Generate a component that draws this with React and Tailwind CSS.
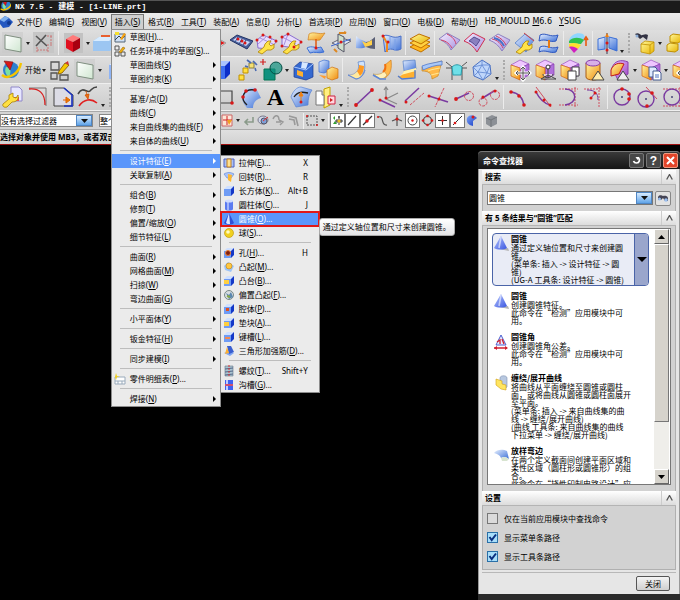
// src/App.jsx
import { useState } from 'react';

const ui = "font-['Noto_Sans','Noto_Sans_CJK_SC',sans-serif]";

// shared gradients, referenced by id from the icons below
function Gradients() {
  const list = [
    ['blue', '#e8f1ff', '#3b6fd6'],
    ['deep', '#7fa6f5', '#1237c4'],
    ['gold', '#fff6a0', '#f08a10'],
    ['yel', '#fff79a', '#e8b400'],
    ['lilac', '#f6f0ff', '#a78fe0'],
    ['sheet', '#ffffff', '#cfe6d0'],
    ['pink', '#ecc8ff', '#9a3fc0'],
    ['cone', '#b9c9ff', '#3a56e0'],
  ];
  return (
    <svg width="0" height="0" className="absolute" aria-hidden="true">
      <defs>
        {list.map(([id, a, b]) => (
          <linearGradient key={id} id={id} x1="0" y1="0" x2="1" y2="1">
            <stop offset="0" stopColor={a} />
            <stop offset="1" stopColor={b} />
          </linearGradient>
        ))}
      </defs>
    </svg>
  );
}

const dots = (pts, r = 1.5) => pts.map(([x, y], i) => <circle key={i} cx={x} cy={y} r={r} fill="#d81818" />);

const wrench = (
  <path d="M4 21l6-5 1-3 3-3 3 0-2 3 2 2 3-2 0 4-3 2-4 0-5 4z" fill="#ffe34a" stroke="#b08400" strokeWidth=".8" />
);

const cube = (
  <>
    <path d="M3 7l9-5 9 4-9 4z" fill="#efc6ff" stroke="#9a50c0" strokeWidth=".7" />
    <path d="M12 10l9-4v11l-9 5z" fill="#b070dc" stroke="#8a3fb0" strokeWidth=".7" />
    <path d="M3 7l9 3v12l-9-4z" fill="url(#gold)" stroke="#d06010" strokeWidth=".7" />
  </>
);

const icons = {
  blank: null,
  plane: (
    <>
      <rect x="1" y="1" width="21" height="21" fill="#cacaca" opacity=".6" />
      <path d="M4 4l16 3v14L4 18z" fill="url(#sheet)" stroke="#7f8f80" />
    </>
  ),
  dims: (
    <>
      <rect x="1" y="1" width="21" height="21" fill="#c6c6c6" />
      <path d="M4 5l11 10M14 4L4 15" stroke="#555" strokeWidth="1.6" fill="none" />
      <path d="M5 16v5M16 16v5M5 19h11M15 5h6M15 14h6M19 5v9" stroke="#c77" fill="none" strokeDasharray="2 1" />
    </>
  ),
  redcube: (
    <>
      <rect x="3" y="2" width="19" height="20" fill="#c2c2c2" />
      <path d="M5 8l7-4 7 3-7 4z" fill="#ff7a7a" />
      <path d="M5 8l7 3v10l-7-4z" fill="#e01020" />
      <path d="M12 11l7-4v10l-7 4z" fill="#a80010" />
    </>
  ),
  slab: (
    <>
      <path d="M1 10l6-4h16v10l-5 4H1z" fill="#9cc6f2" />
      <path d="M1 10l6-4h16l-6 4z" fill="#d8ecff" />
      <path d="M9 5h9" stroke="#e86030" strokeWidth="2" />
    </>
  ),
  slabLow: (
    <>
      <path d="M5 7l5-4h13v13l-5 5H5z" fill="#8fb4f5" />
      <path d="M5 7l5-4h13l-5 4z" fill="#dce9ff" />
    </>
  ),
  redtip: (
    <>
      <path d="M10 5l12 7-6 4-8 2z" fill="#fff" stroke="#999" />
      <path d="M17 10l4 2-4 2z" fill="#d81818" />
    </>
  ),
  film: (
    <>
      <path d="M1 9l7-5 16 6-6 8z" fill="#4a5f9a" stroke="#223366" />
      <path d="M4 9l4-3 13 5-4 4z" fill="#c9d6f7" />
      <path d="M9 6l-3 5M13 8l-3 5M17 9l-3 5" stroke="#33508c" />
      {dots([[9, 8], [13, 10], [16, 12]])}
    </>
  ),
  netA: (
    <>
      <path d="M3 9l6-5 14 6-7 8-12-1z" fill="#e7dcfb" stroke="#8b6fd0" />
      <path d="M6 7l13 6M4 13l9-8M10 17l8-9" stroke="#a78fe0" fill="none" />
      {wrench}
      {dots([[3, 9], [9, 4], [16, 6], [22, 10]])}
    </>
  ),
  netB: (
    <>
      <path d="M3 6l6-3 14 8-8 6-12-2z" fill="#e7dcfb" stroke="#8b6fd0" />
      <path d="M5 14L9 3M3 6l14 7" stroke="#a78fe0" fill="none" />
      {wrench}
      {dots([[3, 6], [9, 3], [3, 15], [22, 11], [15, 16]])}
    </>
  ),
  flipSurf: (
    <>
      <path d="M5 3c5-3 9 1 16-1l-5 7c-4 1-7-1-12 0z" fill="url(#gold)" stroke="#d08020" strokeWidth=".7" />
      <path d="M3 17c5-3 9 1 14-1l3 5c-6 2-9-1-14 1z" fill="url(#blue)" stroke="#3b6fd6" />
      <path d="M12 8v10" stroke="#e05a10" strokeWidth="1.5" />
      {dots([[12, 17]])}
    </>
  ),
  axisPlane: (
    <>
      <path d="M3 12l10-5 9 3-10 6z" fill="#dfe6f5" stroke="#667" />
      <path d="M9 3l6 3v15l-6-4z" fill="#cfe0cc" stroke="#556" />
      <path d="M2 15l20-7" stroke="#3d66d0" />
      <path d="M10 2h7l-2-1M5 18l3 3" stroke="#d82" strokeWidth="2" fill="none" />
      {dots([[12, 11]])}
    </>
  ),
  bow: (
    <>
      <path d="M2 5c4 4 7 4 10 6v5c-4 2-7 1-10 1z" fill="url(#blue)" />
      <path d="M12 11c4 0 6-3 9-5v12c-3 0-6-1-9-2z" fill="#5a5f75" />
      <path d="M8 10l4 2 6-3v5l-7 2z" fill="#ffd04a" />
    </>
  ),
  wave: (
    <>
      <path d="M4 5c6-3 9 4 18 0v13c-7 4-10-4-16 3z" fill="url(#blue)" stroke="#4a70c8" />
      <path d="M4 5l4 7v9" stroke="#ef8a20" strokeWidth="2" fill="none" />
      <path d="M11 6v12M16 8v12" stroke="#7aa0e8" />
      {dots([[4, 5], [9, 11]])}
    </>
  ),
  layers: (
    <>
      <path d="M2 16l9-5 11 4-9 6z" fill="#ffb820" stroke="#c07000" />
      <path d="M2 12l9-5 11 4-9 6z" fill="#ffd040" stroke="#c07000" />
      <path d="M2 8l9-5 11 4-9 6z" fill="url(#yel)" stroke="#c07000" />
    </>
  ),
  sheetA: (
    <>
      <path d="M2 8l8-6 13 7-9 10c-2-5-6-8-12-11z" fill="url(#lilac)" stroke="#8b7fc0" />
      <path d="M4 9c6 1 9 5 11 8M10 3c6 3 8 6 9 10" stroke="#d04060" fill="none" />
    </>
  ),
  sheetB: (
    <>
      <path d="M2 10l9-8 12 6-8 13c-3-5-7-9-13-11z" fill="url(#lilac)" stroke="#d03050" />
      <path d="M7 10l5-4 6 3-4 6c-2-2-4-4-7-5z" fill="#8a80c0" stroke="#554a90" />
    </>
  ),
  sheetC: (
    <>
      <path d="M2 9l9-6 12 6-8 11c-3-5-7-9-13-11z" fill="url(#lilac)" stroke="#8b7fc0" />
      <path d="M5 8c6 1 9 5 11 9M9 5c5 2 8 5 10 9" stroke="#d04060" fill="none" />
      <path d="M7 7c5 1 8 4 10 8" stroke="#4a70c8" strokeWidth="2" fill="none" />
    </>
  ),
  wrenchSheet: (
    <>
      <path d="M3 12L13 3l9 6-8 12z" fill="url(#blue)" stroke="#6a8fd0" />
      <path d="M12 2l10 8" stroke="#d04040" />
      {wrench}
    </>
  ),
  waves: (
    <>
      <path d="M3 4c6-3 10 3 18 0l-2 6c-6 2-10-3-17 0z" fill="url(#blue)" stroke="#2f58c0" />
      <path d="M3 16c6-3 10 3 18 0l-2 5c-6 2-10-3-17 0z" fill="url(#blue)" stroke="#2f58c0" />
      <path d="M12 9v8" stroke="#e87a10" strokeWidth="2" />
    </>
  ),
  rainbow: (
    <>
      <path d="M3 9c2-6 9-8 14-6l4 6-9 3z" fill="#8fd6ff" />
      <path d="M3 10c4-4 10-4 15-1l-3 4-12-1z" fill="#30c050" />
      <path d="M3 13c4-2 8-1 12 1l-3 4-9-2z" fill="#ffe030" />
      <path d="M3 16c4-1 6 0 9 2l-4 4z" fill="#d020c0" />
      <path d="M20 15V8M18 9l2-3 2 3" stroke="#e85a10" strokeWidth="1.6" fill="none" />
    </>
  ),
  mirrorSurf: (
    <>
      <path d="M3 8l7-2v12l-7 1zM14 6l8 2v12l-8-3z" fill="url(#blue)" stroke="#3b6fd6" />
      <path d="M12 2v21" stroke="#667" strokeWidth="1.4" />
      <path d="M10 6l2-4 2 4z" fill="#f08010" />
      {dots([[12, 12], [12, 19]])}
    </>
  ),
  findBox: (
    <>
      <path d="M2 3c3-2 5 0 6 1s4-2 7 0l-1 5-4-3-3 2z" fill="#334" />
      <circle cx="4" cy="5" r="1.5" fill="#8fb0d8" />
      <path d="M8 13l4-3 9 1v9l-4 3-9-2z" fill="url(#yel)" stroke="#c09000" strokeWidth=".8" />
      <path d="M8 13l9 1v9M17 14l4-3" stroke="#c09000" fill="none" strokeWidth=".8" />
    </>
  ),
  boxes: (
    <>
      <path d="M6 5l3-2 8 1v6l-3 2-8-1z" fill="url(#yel)" stroke="#c09000" />
      <path d="M3 14l3-2 8 1v6l-3 2-8-1z" fill="url(#yel)" stroke="#c09000" />
    </>
  ),
  nx: (
    <>
      <circle cx="10" cy="12" r="8" fill="#2f7fd0" />
      <path d="M5 9c4 0 6 4 3 10-3-2-5-6-3-10z" fill="#7fe0a0" />
      <path d="M1 17c6 5 17-1 19-12" stroke="#f5c400" strokeWidth="2.4" fill="none" />
      <path d="M3 3l9 1-3 8z" fill="#d81818" stroke="#801010" strokeWidth=".6" />
    </>
  ),
  sketchTask: (
    <>
      <path d="M3 4h8v8H3zM3 15h6v6H3zM12 17h8v5h-8z" fill="none" stroke="#555" strokeWidth="1.3" />
      <path d="M11 13l6-8 4 2-7 8-4 1z" fill="#f5c800" stroke="#805000" strokeWidth=".8" />
      <path d="M17 5l4 2-1-4z" fill="#d03030" />
    </>
  ),
  bluecube: (
    <>
      <path d="M5 8l5-5h10l-5 5z" fill="#a9c3ff" />
      <path d="M5 8h10v13H5z" fill="#3f6ff0" />
      <path d="M15 8l5-5v13l-5 5z" fill="#0d2ec8" />
    </>
  ),
  pattern: (
    <>
      <path d="M4 17h5v5H4zM8 10h5v5H8z" fill="#ffe040" stroke="#c09000" />
      <path d="M14 5h5v5h-5z" fill="#f5e070" stroke="#8a8040" />
      <path d="M12 2l4 3M18 3l4 4M13 9l-3-1M20 10l1 3" stroke="#4a6ab0" strokeWidth="1.6" fill="none" />
    </>
  ),
  unite: (
    <>
      <path d="M4 11h11v11H4z" fill="#10917f" stroke="#075" />
      <circle cx="16" cy="10" r="6" fill="#10917f" fillOpacity=".7" stroke="#064f46" />
      <path d="M3 1v6M0 4h6" stroke="#d02020" strokeWidth="1.2" />
    </>
  ),
  cutBox: (
    <>
      <path d="M3 9l6-5 13 2v13l-7 3-12-3z" fill="#3569d0" stroke="#1a3a90" strokeWidth=".7" />
      <path d="M3 9l12 3 7-6" stroke="#a9c8ff" fill="none" />
      <path d="M6 12l6 2v5l-6-2z" fill="#ffb030" />
      <path d="M11 4l6 1-2 6-5-1z" fill="#d8e8ff" />
    </>
  ),
  boxPair: (
    <>
      <path d="M3 4l5-2 5 1v10l-5 2-5-1z" fill="url(#blue)" stroke="#3b6fd6" strokeWidth=".7" />
      <path d="M11 12l5-3 6 2v9l-6 2-5-2z" fill="url(#gold)" stroke="#d07010" strokeWidth=".7" />
      <path d="M3 17l6 4 1-3z" fill="#ff9d30" />
    </>
  ),
  flange: (
    <>
      <path d="M13 4l6-1c2 7 0 13-4 16l-4-4c3-3 3-7 2-11z" fill="#cfe2fb" stroke="#5580c8" strokeWidth=".7" />
      <path d="M3 17c4 0 7-1 9-4l6 2c-2 4-4 6-7 6z" fill="#ffe9a0" stroke="#8a9ac0" strokeWidth=".7" />
      <path d="M12 13c2-2 2-4 2-6l5 1c0 4-1 7-4 10z" fill="#ff9a20" />
      <path d="M3 17l8 4c6-1 8-5 9-9" stroke="#5c86d8" fill="none" />
    </>
  ),
  bend: (
    <>
      <path d="M15 7l6-5c1 8 0 14-6 18l-4-3c4-3 5-6 4-10z" fill="#ffb648" stroke="#d08020" strokeWidth=".7" />
      <path d="M3 16c5 1 9 0 11-3l3 4c-2 3-4 4-7 4z" fill="#fff0b8" stroke="#c09a50" strokeWidth=".7" />
      <path d="M13 14c2-2 3-5 2-8" stroke="#f07010" strokeWidth="2" fill="none" />
      <path d="M3 17l7 4h6" stroke="#5c86d8" strokeWidth="1.6" fill="none" />
    </>
  ),
  loft: (
    <>
      <path d="M8 3l12-1 1 9-12 2z" fill="url(#blue)" stroke="#5580c8" strokeWidth=".7" />
      <path d="M9 13l12-2-1 8c-4 2-10 2-17 0 4-1 5-3 6-6z" fill="#ffb030" />
      <path d="M9 13l12-3 0 3c-5 1-12 3-18 5 4-1 5-3 6-5z" fill="#fff3b0" />
      <path d="M3 18l4 3 13-1V12" stroke="#4f7ad0" strokeWidth="1.3" fill="none" />
    </>
  ),
  fan: (
    <>
      <path d="M2 9c7-3 12-4 20-6l-4 15-6 3c0-6-4-8-10-8z" fill="#ffb848" stroke="#c88820" strokeWidth=".7" />
      <path d="M2 8c7-3 13-3 20-5v4c-7 0-12 2-19 5z" fill="#a9c8f8" stroke="#4f7ad0" strokeWidth=".8" />
      <path d="M8 13c4-2 8-2 12-3M11 17l8-2" stroke="#ffe690" strokeWidth="1.2" fill="none" />
    </>
  ),
  teal: (
    <>
      <path d="M1 4l6 5M22 4l-6 5M7 22V9M17 22V9M1 10h21" stroke="#555" fill="none" />
      <path d="M7 9c3-3 7-3 10 0l-1 8H8z" fill="#6fe0e8" stroke="#2a9aa8" />
    </>
  ),
  gem: (
    <>
      <path d="M12 2l8 5 1 9-8 6-9-4-1-9z" fill="#bfd6fa" stroke="#4a70c0" />
      <path d="M3 9l9-2 8 0M12 2v5l-4 7 5 8M12 7l5 8 3-8M8 14l9 1 4 1M8 14l-4 4M8 14L3 9M17 15l-4 7" stroke="#5f86d0" fill="none" strokeWidth=".8" />
    </>
  ),
  cubeMove: <>{cube}<path d="M15 9v13M8 15h14M13 11l2-2 2 2M13 20l2 2 2-2M10 13l-2 2 2 2M20 13l2 2-2 2" stroke="#fff" strokeWidth="3" fill="none" /><path d="M15 9v13M8 15h14M13 11l2-2 2 2M13 20l2 2 2-2M10 13l-2 2 2 2M20 13l2 2-2 2" stroke="#555" fill="none" /></>,
  cubeAnchor: <>{cube}<path d="M15 10v10M10 16c0 5 9 5 10 0M8 21l7-4 8 4z" stroke="#444" fill="#ffffffaa" /><circle cx="15" cy="9" r="2" fill="#fff" stroke="#333" /></>,
  cubeCopy: <>{cube}<path d="M14 9h7v9h-7z" fill="#fff" stroke="#444" /><path d="M10 13h8v9h-8z" fill="#fff" stroke="#444" /></>,
  cylTri: (
    <>
      <path d="M3 5v14c0 4 14 4 14 0V5z" fill="url(#gold)" stroke="#a85a10" />
      <ellipse cx="10" cy="5" rx="7" ry="3" fill="#d8b0e8" stroke="#8a3fb0" />
      <path d="M15 13l6 9H9z" fill="#ffedb0" stroke="#444" />
    </>
  ),
  halfTri: (
    <>
      <path d="M4 10c2-7 9-9 16-6v12l-10 6z" fill="url(#pink)" stroke="#8a3fb0" />
      <path d="M3 12c2-6 8-8 13-6l-5 10-8 2z" fill="url(#gold)" stroke="#c01818" />
      <path d="M15 13l6 9H9z" fill="#eee" stroke="#444" />
    </>
  ),
  cubePages: <>{cube}<path d="M10 9h6l2 2v8h-8z" fill="#dfeaff" stroke="#445a90" /><path d="M14 13h6l2 2v7h-8z" fill="#fff" stroke="#445a90" /><path d="M16 17h4M16 19h4" stroke="#4a70c0" /></>,
  wrenchPage: (
    <>
      <path d="M10 2h8l3 3v11H10z" fill="#e6e6ff" stroke="#9088c8" />
      <path d="M13 12h5v4h-5z" fill="#e85050" />
      <path d="M2 19l6-5 0-4 4-2 0 4 3 1 2-3c1 5-2 7-6 7l-5 5c-3 1-5-1-4-3z" fill="#ffe040" stroke="#a88000" strokeWidth=".8" />
    </>
  ),
  redCurve: (
    <>
      <path d="M3 3h17v18" stroke="#777" fill="none" />
      <path d="M3 4c10-1 16 4 16 16" stroke="#d82020" strokeWidth="1.3" fill="none" />
    </>
  ),
  pageBlue: (
    <>
      <path d="M3 3h10l9 7v11H3z" fill="#dcdce6" stroke="#444" />
      <path d="M13 3l8 7v11h-8" fill="none" stroke="#1830c0" strokeWidth="1.6" />
      <path d="M12 15h5M15 12l4 3-4 3z" stroke="#e06000" fill="#f08a00" />
    </>
  ),
  curves: (
    <>
      <path d="M2 9c5-9 9 0 12-3s3-4 7-4" stroke="#444" strokeWidth="1.6" fill="none" />
      <path d="M3 21c5-7 12-8 18-3" stroke="#e02020" strokeWidth="1.6" fill="none" />
      <path d="M10 6l1 4M9 10l3 4 1-5z" fill="#f07010" stroke="#d05000" strokeWidth=".8" />
    </>
  ),
  rect: (
    <>
      <path d="M2 6h16v12H2z" fill="none" stroke="#444" strokeWidth="1.2" />
      {dots([[18, 18]], 1.8)}
    </>
  ),
  fitSurf: (
    <>
      <path d="M3 8c4-6 9-6 14-5l5 10c-5 1-8 5-8 10H8C3 18 2 13 3 8z" fill="url(#blue)" />
      <path d="M8 20C0 13 5 3 16 5" stroke="#222" strokeWidth="1.4" fill="none" />
      {dots([[16, 5], [7, 6], [4, 12]], 1.8)}
    </>
  ),
  bluePatch: (
    <>
      <path d="M2 12C4 6 8 2 12 2l11 3c-3 4-4 9-4 15L7 22z" fill="url(#blue)" stroke="#5a84d4" strokeWidth=".7" />
      <path d="M5 12c4-6 9-5 14-4" stroke="#222" strokeWidth="1.3" fill="none" />
      <path d="M12 16V9M10 11l2-4 2 4z" stroke="#f08010" fill="#f08010" />
      {dots([[12, 17]])}
    </>
  ),
  mirror: (
    <>
      <path d="M10 4l6-2v18l-6 3z" fill="#ffef80" stroke="#c0a000" />
      <path d="M2 6h6v4h2v10H2z" fill="#fff" stroke="#777" />
      <path d="M14 11h7v8h-7z" fill="#ffd8e0" stroke="#d02040" />
      <path d="M16 13l3 2-3 2z" fill="#d02020" />
    </>
  ),
  line: <><path d="M4 20L20 5" stroke="#7a3aa0" strokeWidth="1.6" />{dots([[4, 20], [20, 5]], 1.9)}</>,
  lineAxis: (
    <>
      <path d="M9 14V3M9 14l12-6M9 14l11 5M7 5l2-3 2 3" stroke="#888" fill="none" strokeWidth="1.2" />
      <path d="M3 15l15 7" stroke="#7a3aa0" strokeWidth="1.5" />
      {dots([[3, 15], [9, 13]])}
    </>
  ),
  parallel: (
    <>
      <path d="M3 16L17 3" stroke="#7a3aa0" strokeWidth="1.5" />
      <path d="M8 20L22 8" stroke="#d05060" strokeDasharray="3 1" />
      {dots([[4, 17]])}
    </>
  ),
  cross: (
    <>
      <path d="M2 11l19 6" stroke="#7a3aa0" strokeWidth="1.5" />
      <path d="M17 3L8 22" stroke="#d05060" strokeDasharray="3 1" />
      {dots([[2, 11], [12, 14]])}
    </>
  ),
  tangent: (
    <>
      <path d="M4 14l13-6" stroke="#7a3aa0" strokeWidth="1.5" />
      <circle cx="17" cy="11" r="4.5" fill="none" stroke="#d05060" strokeDasharray="3 1" />
      {dots([[4, 14]], 1.9)}
    </>
  ),
  tangent2: (
    <>
      <path d="M4 14L17 6" stroke="#7a3aa0" strokeWidth="1.5" />
      <circle cx="6" cy="17" r="4" fill="none" stroke="#d05060" strokeDasharray="3 1" />
      <circle cx="18" cy="10" r="4.5" fill="none" stroke="#d05060" strokeDasharray="3 1" />
      {dots([[6, 12], [18, 6]])}
    </>
  ),
  arc3: <><path d="M5 7c8 1 12 6 13 14" stroke="#7a3aa0" strokeWidth="1.5" fill="none" />{dots([[5, 7], [13, 11], [18, 20]], 1.8)}</>,
  arcTan: (
    <>
      <path d="M5 7c3 6 7 11 14 13" stroke="#7a3aa0" strokeWidth="1.5" fill="none" />
      <path d="M5 2l15 20" stroke="#d05060" />
      {dots([[5, 7], [13, 15], [19, 20]])}
    </>
  ),
  arcBox: (
    <>
      <path d="M3 4h19M3 20h19M19 2v20" stroke="#d05060" strokeDasharray="2 1" />
      <path d="M9 4c13 0 13 15 0 16" stroke="#7a3aa0" strokeWidth="1.5" fill="none" />
    </>
  ),
  arcCorner: (
    <>
      <path d="M3 4h18M18 2v20" stroke="#d05060" strokeDasharray="2 1" />
      <path d="M6 5c8 0 11 3 11 10M9 14l6-7" stroke="#7a3aa0" fill="none" />
      {dots([[14, 8], [10, 13]])}
    </>
  ),
  circ3: <><circle cx="12" cy="12" r="8" fill="none" stroke="#7a3aa0" strokeWidth="1.4" /><circle cx="12" cy="12" r="1" fill="#447" />{dots([[12, 4], [19, 9], [19, 14]], 1.8)}</>,
  circTan: <><circle cx="11" cy="14" r="8" fill="none" stroke="#7a3aa0" strokeWidth="1.4" /><circle cx="11" cy="14" r="1" fill="#447" /><path d="M11 2l11 12" stroke="#d05060" />{dots([[17, 8], [12, 21]], 1.8)}</>,
  circBox: (
    <>
      <path d="M3 4h20M3 21h20M20 2v20" stroke="#d05060" strokeDasharray="2 1" />
      <circle cx="12" cy="12" r="8" fill="none" stroke="#7a3aa0" strokeWidth="1.4" />
      <circle cx="12" cy="12" r="1" fill="#447" />
    </>
  ),
};

const row1 = ['plane', 'dd', 'dims', '|', 'redcube', 'dd', 'slab', '|', 'blank', '|', 'blank', '|', 'blank', 'redtip', 'film', 'netA', 'netB', 'flipSurf', 'axisPlane', 'bow', 'wave', '|', 'layers', '|', 'sheetA', 'sheetB', 'sheetC', 'wrenchSheet', 'waves', '|', 'rainbow', '|', 'mirrorSurf', 'dd2', 'grip', 'findBox', 'dd', 'boxes'];
const row2 = ['nx', 'start', 'dd', 'sketchTask', 'plane', 'dd', 'slabLow', 'blank', 'blank', 'blank', 'dd', 'bluecube', 'pattern', 'unite', 'dd', 'cutBox', 'boxPair', '|', 'flange', 'bend', 'loft', 'fan', 'teal', 'gem', 'dd2', 'grip', 'cubeMove', 'cubeAnchor', 'cubeCopy', 'cylTri', 'halfTri', 'dd', 'cubePages', 'dd', 'cubeMove'];
const row3 = ['wrenchPage', 'redCurve', 'pageBlue', 'curves', 'dd2', 'grip', 'blank', 'blank', 'blank', 'blank', 'rect', 'fitSurf', 'letter', 'bluePatch', 'mirror', 'dd2', 'grip', 'line', 'lineAxis', 'parallel', 'cross', 'tangent', 'tangent2', '|', 'arc3', 'arcTan', 'arcBox', 'arcCorner', '|', 'circ3', 'circTan', 'circBox'];

function Caret({ low }) {
  return (
    <span className={`flex w-1.5 shrink-0 justify-center ${low ? 'h-5 items-end' : ''}`}>
      <svg width="4" height="3" viewBox="0 0 4 3"><path d="M0 0h4L2 3z" fill="#222" /></svg>
    </span>
  );
}

function ToolRow({ items }) {
  return (
    <div className="flex h-[27px] items-center overflow-hidden border-b border-[#efefef] bg-linear-to-b from-[#dedede] to-[#cbcbcb]">
      {items.map((name, i) => {
        if (name === '|') return <span key={i} className="flex h-6 w-1 shrink-0 justify-center"><span className="w-px bg-[#ececec]" /></span>;
        if (name === 'dd' || name === 'dd2') return <Caret key={i} low={name === 'dd2'} />;
        if (name === 'grip') return <span key={i} className="flex w-[7px] shrink-0 justify-center"><span className="h-5 border-l-2 border-dotted border-[#aaa]" /></span>;
        if (name === 'start') return <button key={i} className="w-4 shrink-0 whitespace-nowrap text-[8px]">开始</button>;
        if (name === 'letter') return <button key={i} className="w-[25px] shrink-0 font-['Liberation_Serif',serif] text-[24px] leading-6 font-bold">A</button>;
        return (
          <button key={i} className="flex w-[25px] shrink-0 justify-center" aria-label={name}>
            <svg width="24" height="24" viewBox="0 0 24 24">{icons[name]}</svg>
          </button>
        );
      })}
    </div>
  );
}

// snap point and selection icons, 15px grid
const snaps = [
  { d: <><path d="M2 2h10v11H2z" fill="#fbe6d8" stroke="#c66" /><path d="M7 3v9M3 7h9" stroke="#d02020" /><path d="M7 7h5l-3 5z" fill="#f0a020" /></> },
  'dd',
  { d: <path d="M12 4v5H5M7 6L4 9l3 3" stroke="#8a9a8a" strokeWidth="1.6" fill="none" /> },
  { d: <><ellipse cx="7" cy="7" rx="5" ry="4" fill="#cfd8ea" stroke="#778" /><circle cx="8" cy="8" r="3" fill="#7fa0d8" stroke="#556" /><path d="M7 8l5-4" stroke="#d33" /></> },
  { d: <path d="M2 6c2-5 6-4 6 1M5 9l5 0M8 7l4 2-3 3" stroke="#999" strokeWidth="1.4" fill="none" /> },
  { d: <path d="M3 3l7 2 2 8M3 6l5 1 1 5" stroke="#999" strokeWidth="1.6" fill="none" /> },
  '|',
  { d: <><path d="M2 3h10v9H2z" fill="none" stroke="#555" strokeDasharray="2 1" />{dots([[2, 3], [12, 12]], 1)}</> },
  'dd',
  '|',
  { box: true, d: <><path d="M3 5l2-2v4zM3 11l2-3 2 3z" fill="#30a030" /><path d="M9 3v9M5 8h8M8 4l2 0M11 6v4M7 6v4" stroke="#333" /><circle cx="9" cy="8" r="1.6" fill="#f0c020" /></> },
  { box: true, d: <path d="M3 12l8-9" stroke="#333" strokeWidth="1.2" /> },
  { box: true, d: <><path d="M3 12l9-9" stroke="#333" strokeWidth="1.2" />{dots([[7, 8]], 1.7)}</> },
  { d: <><path d="M3 4c7-2 2 9 9 8" stroke="#555" strokeWidth="1.2" fill="none" />{dots([[3, 4]], 1)}</> },
  { d: <><path d="M7 2v11M2 8l5-2 5 2" stroke="#555" strokeWidth="1.2" fill="none" />{dots([[7, 6]], 1.5)}</> },
  { box: true, d: <><circle cx="7.5" cy="7.5" r="4.5" fill="none" stroke="#444" />{dots([[7.5, 7.5]], 1.2)}</> },
  { d: <><circle cx="7.5" cy="7.5" r="4" fill="none" stroke="#444" strokeWidth="1.2" />{dots([[7.5, 3], [7.5, 12], [3, 7.5], [12, 7.5]], 1.3)}</> },
  { box: true, d: <><path d="M7.5 3v9M3 7.5h9" stroke="#333" />{dots([[7.5, 7.5]], 1.2)}</> },
  { box: true, d: <><path d="M3 12l9-9" stroke="#333" />{dots([[5, 10]], 1.3)}</> },
  { d: <><path d="M2 5c3-4 7-3 10 0l-4 3 0 5c-5-1-7-4-6-8z" fill="url(#deep)" />{dots([[8, 4]], 1.5)}</> },
  '|',
  { d: <><path d="M2 5l6-3 5 2v7l-6 3-5-3z" fill="#8c9096" /><path d="M2 5l5 2 6-3M7 7v7" stroke="#707479" fill="none" /></> },
];

// small icons of the menu entries, 12px grid
const box = (
  <>
    <path d="M1 4l3-3h7L8 4z" fill="#cfe0ff" />
    <path d="M1 4h7v7H1z" fill="#6f9cf5" />
    <path d="M8 4l3-3v7l-3 3z" fill="#1438c8" />
  </>
);
const small = {
  sketch: <><path d="M1 3h10v8H1z" fill="#cfe0f5" stroke="#567" /><path d="M1 9l4-4 3 3 3-3" stroke="#345" fill="none" /><path d="M1 1h4v3H1z" fill="#f5e030" /><path d="M6 8l4-6 2 1-4 6z" fill="#f5a010" /></>,
  task: <><path d="M1 1h4v4H1zM1 7h4v4H1zM7 7h4v4H7z" fill="none" stroke="#555" /><path d="M5 7l4-5 2 1-4 5z" fill="#f0b010" stroke="#850" strokeWidth=".5" /></>,
  parts: <><path d="M1 4h10v7H1z" fill="#fff" stroke="#9ab" /><path d="M1 8h10M4 8v3M8 8v3" stroke="#9ab" /><path d="M2 0l1 3 3 0-3 1-1 3-1-3z" fill="#f0d020" /></>,
  extrude: <><path d="M1 2h10v8H1z" fill="#a9bff5" stroke="#4a5fc0" /><path d="M4 2h4v8H4z" fill="#ffe090" stroke="#c08020" /></>,
  revolve: <><path d="M1 3c3-2 7-2 10 0l-3 4H4z" fill="#a9c3fa" stroke="#5a80d0" strokeWidth=".6" /><path d="M5 3l4 1-1 7-3-2z" fill="#ffb830" /></>,
  block: box,
  cylinder: <><path d="M2 2v8c0 2 8 2 8 0V2z" fill="#5a7af0" /><path d="M5 3v8" stroke="#a0b4fa" strokeWidth="2" /><ellipse cx="6" cy="2" rx="4" ry="1.5" fill="#cfdcff" /></>,
  cone: <><path d="M6 0l5 10c-2 2-8 2-10 0z" fill="#2f50d8" /><path d="M6 0l1 11c-2 0-3 0-4-1z" fill="#dfe6ff" /></>,
  sphere: <><circle cx="6" cy="6" r="4.5" fill="#f0d020" stroke="#b89000" strokeWidth=".6" /><circle cx="5" cy="5" r="1.8" fill="#fffbc0" /></>,
  hole: <>{box}<circle cx="5" cy="6" r="2.5" fill="#802010" stroke="#f08030" /></>,
  boss: <><path d="M1 5l4-4 6 4-3 6-6-2z" fill="#9cc4f7" /><circle cx="6" cy="5" r="3" fill="#ffc840" stroke="#c08010" strokeWidth=".6" /></>,
  pad: <>{box}<path d="M1 5h5v4H1z" fill="#ffd040" /></>,
  offset: <><circle cx="6" cy="6" r="4.5" fill="#d8dde0" stroke="#788" /><path d="M3 4l3 2 2-3 2 5-4 2z" fill="#5a86b0" /><path d="M4 7l3 1" stroke="#8a4" strokeWidth="2" /></>,
  pocket: <>{box}<path d="M3 5h3v3H3z" fill="#e05020" /></>,
  groove: <>{box}<path d="M2 6h5v2H2z" fill="#f08a50" /></>,
  dart: <><path d="M1 8l5-2 5 2-4 3z" fill="#7fa6f5" /><path d="M4 1h4l3 6-5 2z" fill="#3a5fd0" /><path d="M4 2l2 6-4 1z" fill="#ffb030" /></>,
  thread: <><path d="M2 1h8v10H2z" fill="#a9c4d0" stroke="#678" strokeWidth=".6" /><path d="M2 4l8-1M2 7l8-1M2 10l8-1" stroke="#568" /><path d="M6 0v12" stroke="#e03030" strokeDasharray="2 1" /></>,
  slot: <><path d="M2 1h8v10H2z" fill="#3f62f0" /><path d="M3 1h2v10H3z" fill="#c0d0ff" /><path d="M2 5h8v2H2z" fill="#d05070" /></>,
};

const insertMenu = [
  { t: '草图(H)...', icon: 'sketch' }, { t: '任务环境中的草图(S)...', icon: 'task' }, { t: '草图曲线(S)', sub: 1 }, { t: '草图约束(K)', sub: 1 }, '-',
  { t: '基准/点(D)', sub: 1 }, { t: '曲线(C)', sub: 1 }, { t: '来自曲线集的曲线(F)', sub: 1 }, { t: '来自体的曲线(U)', sub: 1 }, '-',
  { t: '设计特征(E)', sub: 1, open: 1 }, { t: '关联复制(A)', sub: 1 }, '-',
  { t: '组合(B)', sub: 1 }, { t: '修剪(T)', sub: 1 }, { t: '偏置/缩放(O)', sub: 1 }, { t: '细节特征(L)', sub: 1 }, '-',
  { t: '曲面(R)', sub: 1 }, { t: '网格曲面(M)', sub: 1 }, { t: '扫掠(W)', sub: 1 }, { t: '弯边曲面(G)', sub: 1 }, '-',
  { t: '小平面体(Y)', sub: 1 }, '-', { t: '钣金特征(H)', sub: 1 }, '-', { t: '同步建模(I)', sub: 1 }, '-',
  { t: '零件明细表(P)...', icon: 'parts' }, '-', { t: '焊接(N)', sub: 1 },
];

const featureMenu = [
  { t: '拉伸(E)...', icon: 'extrude', key: 'X' }, { t: '回转(R)...', icon: 'revolve', key: 'R' }, { t: '长方体(K)...', icon: 'block', key: 'Alt+B' },
  { t: '圆柱体(C)...', icon: 'cylinder', key: 'J' }, { t: '圆锥(O)...', icon: 'cone', hot: 1 }, { t: '球(S)...', icon: 'sphere' }, '-',
  { t: '孔(H)...', icon: 'hole', key: 'H' }, { t: '凸起(M)...', icon: 'boss' }, { t: '凸台(B)...', icon: 'pad' }, { t: '偏置凸起(F)...', icon: 'offset' },
  { t: '腔体(P)...', icon: 'pocket' }, { t: '垫块(A)...', icon: 'pad' }, { t: '键槽(L)...', icon: 'groove' }, { t: '三角形加强筋(D)...', icon: 'dart' }, '-',
  { t: '螺纹(T)...', icon: 'thread', key: 'Shift+Y' }, { t: '沟槽(G)...', icon: 'slot' },
];

// underlines the access key in "文件(F)"
function Label({ text }) {
  const m = text.match(/^(.*\()(\w)(\).*)$/);
  if (!m) return text;
  return <>{m[1]}<u>{m[2]}</u>{m[3]}</>;
}

function Separator() {
  return <li className="flex h-1.5 items-center pr-2 pl-2"><span className="h-px w-full bg-[#bdbdbd]" /></li>;
}

function MenuRow({ item, children }) {
  const lit = item.open || item.hot;
  return (
    <li className="relative">
      <button className={`flex h-3.5 w-full items-center pr-1 text-left text-[8px] leading-3 whitespace-nowrap ${lit ? 'bg-[#5a96fb] text-white' : 'text-black'} ${item.hot ? 'outline-2 -outline-offset-1 outline-[#e01818]' : ''}`}>
        <span className="flex w-[18px] shrink-0 pl-0.5">
          {item.icon && <svg width="12" height="12" viewBox="0 0 12 12">{small[item.icon]}</svg>}
        </span>
        <span className="grow"><Label text={item.t} /></span>
        {item.key && <span className="pr-[7px]">{item.key}</span>}
        {item.sub && <svg width="3" height="6" viewBox="0 0 3 6"><path d="M0 0l3 3-3 3z" fill={lit ? '#fff' : '#000'} /></svg>}
      </button>
      {children}
    </li>
  );
}

function FeatureMenu() {
  return (
    <ul className="absolute top-px left-full z-10 w-[100px] border border-[#8c8c8c] bg-[#ebebeb]">
      {featureMenu.map((item, i) => item === '-' ? <Separator key={i} /> : (
        <MenuRow key={i} item={item}>
          {item.hot && (
            <div role="tooltip" className="absolute top-1.5 left-full h-[18px] rounded-[3px] border border-[#aaa] bg-linear-to-b from-white to-[#e4e4e6] px-[3px] text-[8px] leading-4 whitespace-nowrap">
              通过定义轴位置和尺寸来创建圆锥。
            </div>
          )}
        </MenuRow>
      ))}
    </ul>
  );
}

const menus = ['文件(F)', '编辑(E)', '视图(V)', '插入(S)', '格式(R)', '工具(T)', '装配(A)', '信息(I)', '分析(L)', '首选项(P)', '应用(N)', '窗口(O)', '电极(D)', '帮助(H)'];

function MenuBar() {
  return (
    <nav className="flex h-[17px] items-center gap-px bg-linear-to-b from-[#ececec] to-[#dadada]">
      <svg className="w-[13px] shrink-0" height="14" viewBox="0 0 13 14">
        <path d="M0 5l5-4 4 2 4 4-4 5-6 1-3-4z" fill="#2458c0" />
        <path d="M0 5l5-4 4 2-5 4z" fill="#7fb0f0" />
        <circle cx="9" cy="8" r="2" fill="#123a90" />
      </svg>
      {menus.map((m) => m === '插入(S)' ? (
        <div key={m} className="relative flex">
          <button className="h-4 border border-[#777] bg-[#cfcfcf] px-[3px] text-[8px] leading-3 whitespace-nowrap"><Label text={m} /></button>
          <ul className="absolute top-[15px] left-0 z-20 w-[110px] border border-[#8c8c8c] bg-[#ebebeb]">
            {insertMenu.map((item, i) => item === '-' ? <Separator key={i} /> : (
              <MenuRow key={i} item={item}>{item.open && <FeatureMenu />}</MenuRow>
            ))}
          </ul>
        </div>
      ) : (
        <button key={m} className="h-4 px-[3px] text-[8px] leading-3 whitespace-nowrap"><Label text={m} /></button>
      ))}
      <button className="px-[3px] font-['DejaVu_Sans',sans-serif] text-[8px] leading-3 whitespace-nowrap">HB_MOULD <u>M</u>6.6</button>
      <button className="px-[3px] font-['DejaVu_Sans',sans-serif] text-[8px] leading-3"><u>Y</u>SUG</button>
    </nav>
  );
}

function ArrowBox() {
  return (
    <span className="pointer-events-none flex h-full w-4 shrink-0 items-center justify-center border border-[#4f86c4] bg-linear-to-b from-[#d8ecff] to-[#5fa4e8]">
      <svg width="7" height="4" viewBox="0 0 7 4"><path d="M0 0h7L3.5 4z" fill="#111" /></svg>
    </span>
  );
}

function SelectionBar() {
  return (
    <div className="flex h-[19px] items-center overflow-hidden border-y border-[#a9a9a9] bg-[#d4d4d4]">
      <label className="flex h-[13px] w-[93px] shrink-0 border border-[#888] bg-white">
        <select aria-label="过滤器" className="min-w-0 grow appearance-none text-[8px] leading-[11px]"><option>没有选择过滤器</option></select>
        <ArrowBox />
      </label>
      <label className="mr-1 ml-1.5 flex h-[13px] w-[117px] shrink-0 border border-[#888] bg-white">
        <select aria-label="范围" className="min-w-0 grow appearance-none text-[8px] leading-[11px]"><option>整个</option></select>
        <ArrowBox />
      </label>
      {snaps.map((s, i) => {
        if (s === '|') return <span key={i} className="flex h-4 w-1 shrink-0 justify-center"><span className="w-px bg-[#f0f0f0]" /></span>;
        if (s === 'dd') return <Caret key={i} />;
        return (
          <button key={i} aria-label={`捕捉 ${i}`} className={`w-[15px] shrink-0 ${s.box ? 'bg-white outline -outline-offset-1 outline-[#777]' : ''}`}>
            <svg width="15" height="15" viewBox="0 0 15 15">{s.d}</svg>
          </button>
        );
      })}
    </div>
  );
}

const bigCone = <><path d="M5 14l10 2-1-3z" fill="#b4b4b4" /><path d="M7 1l6 12c-3 2-10 2-13 0z" fill="url(#cone)" /><path d="M7 2L5 13" stroke="#e8edff" strokeWidth="1.6" opacity=".7" /></>;

const results = [
  { title: '圆锥', icon: bigCone, active: true, lines: ['通过定义轴位置和尺寸来创建圆', '锥。', '(菜单条: 插入 -> 设计特征 -> 圆', '锥)', '(UG-A 工具条: 设计特征 -> 圆锥)'] },
  { title: '圆锥', icon: bigCone, lines: ['创建圆锥特征。', '此命令在“检测”应用模块中可', '用。'] },
  {
    title: '圆锥角',
    icon: <><path d="M7 1l5 10H2z" fill="#e8ecff" stroke="#4a5fd0" /><path d="M3 8l3-2v4M8 5l2 5M0 14h13" stroke="#d02030" strokeWidth="1.3" fill="none" /><path d="M0 14l3-2v4zM14 14l-3-2v4z" fill="#d02030" /></>,
    lines: ['创建圆锥角公差。', '此命令在“检测”应用模块中可', '用。'],
  },
  {
    title: '缠绕/展开曲线',
    icon: <><path d="M6 3c0-3 7-3 7 0v9c-2 2-5 2-7 0z" fill="#b8c8e0" stroke="#8090b0" strokeWidth=".6" /><path d="M2 4l6 2v3l4 1v5l-5-1-5-4z" fill="#ffe560" stroke="#d0a010" strokeWidth=".6" /></>,
    lines: ['将曲线从平面缠绕至圆锥或圆柱', '面，或将曲线从圆锥或圆柱面展开', '至平面。', '(菜单条: 插入 -> 来自曲线集的曲', '线 -> 缠绕/展开曲线)', '(曲线 工具条: 来自曲线集的曲线', '下拉菜单 -> 缠绕/展开曲线)'],
  },
  {
    title: '放样弯边',
    icon: <><path d="M0 5c3-4 9-4 13-2l2 8c-3-2-5-3-8-1-1-3-4-4-7-5z" fill="url(#blue)" /><path d="M7 10c3-2 5-1 8 1l-2 2-5 0z" fill="#d8e4d0" /></>,
    lines: ['在两个定义截面间创建平面区域和', '柔性区域（圆柱形或圆锥形）的组', '合。', '此命令在“挠性印制电路设计”应'],
  },
];

function SectionHead({ children }) {
  return (
    <h2 className="flex h-[15px] items-center border-b border-[#b4b4b4] bg-linear-to-b from-white to-[#dcdcdc] pl-[3px] text-[8px] leading-3 font-bold">
      <span className="grow">{children}</span>
      <button aria-label="折叠" className="flex h-full w-[15px] items-center justify-center border-l border-[#ccc]">
        <svg width="7" height="6" viewBox="0 0 7 6"><path d="M.7 5.5l2.8-5 2.8 5" fill="none" stroke="#555" strokeWidth="1.3" /></svg>
      </button>
    </h2>
  );
}

function Option({ label, defaultChecked }) {
  const [on, setOn] = useState(defaultChecked);
  return (
    <label className="flex h-[19px] items-center gap-1.5 text-[8px]">
      <span className="grid size-[11px] place-items-center">
        <input type="checkbox" checked={on} onChange={(e) => setOn(e.target.checked)} className="col-start-1 row-start-1 size-[11px] appearance-none border border-[#777] bg-[#dadada] checked:border-[#2a70a8] checked:bg-[#a8defa]" />
        {on && <svg className="pointer-events-none col-start-1 row-start-1" width="9" height="9" viewBox="0 0 9 9"><path d="M1.5 4l2.2 3L8 1.5" fill="none" stroke="#0a2f80" strokeWidth="2" /></svg>}
      </span>
      {label}
    </label>
  );
}

function CommandFinder() {
  const [query, setQuery] = useState('圆锥');
  return (
    <section className="absolute top-[151px] right-0 w-[202px] rounded-t-sm bg-[#2b2b2b] pb-1.5">
      <header className="flex h-[18px] items-center gap-0.5 rounded-t-sm border-t border-[#777] bg-linear-to-b from-[#3a3a3a] to-[#161616] pr-0.5 pl-[5px] text-[8px] font-bold text-white">
        <h1 className="grow">命令查找器</h1>
        <button aria-label="重置" className="flex size-[15px] items-center justify-center rounded-[2px] border border-[#777] bg-[#484848]">
          <svg width="9" height="9" viewBox="0 0 9 9"><path d="M6 1.500c2.500 2 1.500 5.500-1.500 5.500-1.500 0-2.500-.5-3-2" fill="none" stroke="#fff" strokeWidth="1.7" /><path d="M3.500 1h4l-2 3z" fill="#fff" /></svg>
        </button>
        <button aria-label="帮助" className="flex size-[15px] items-center justify-center rounded-[2px] border border-[#777] bg-[#484848] font-['Liberation_Sans',sans-serif] text-[12px] leading-3">?</button>
        <button aria-label="关闭窗口" className="flex size-[15px] items-center justify-center rounded-[2px] border border-[#f09a80] bg-[#e2452a]">
          <svg width="9" height="9" viewBox="0 0 9 9"><path d="M1 1l7 7M8 1L1 8" stroke="#fff" strokeWidth="2" /></svg>
        </button>
      </header>

      <div className="border-x border-[#999] bg-[#e6e6e6] px-[3px] pt-px">
        <SectionHead>搜索</SectionHead>
        <div className="flex h-[26px] items-center gap-0.5 border-x border-[#b0b0b0] bg-[#d2d2d2] px-1">
          <div className="flex h-3.5 grow border border-[#777] bg-white">
            <input aria-label="搜索" value={query} onChange={(e) => setQuery(e.target.value)} className="w-0 grow px-px text-[8px] leading-3 outline-none" />
            <button aria-label="历史" className="h-full"><ArrowBox /></button>
          </div>
          <button aria-label="查找" className="flex h-[15px] w-4 items-center justify-center rounded-[2px] border border-[#888] bg-[#e2e2e2]">
            <svg width="12" height="9" viewBox="0 0 12 9"><path d="M1 3c2-3 4-1 5-1s4-1 5 2v3H8L6 4 4 6H1z" fill="#445" /><circle cx="2.500" cy="5" r="1.500" fill="#9cc0f0" /><circle cx="9" cy="6" r="1.800" fill="#9cc0f0" /></svg>
          </button>
        </div>

        <SectionHead>有 5 条结果与“圆锥”匹配</SectionHead>
        <div className="border-x border-[#b0b0b0] bg-[#d2d2d2] px-1 pt-0.5 pb-1.5">
          <div className="flex h-[257px] border border-[#777] bg-white">
            <ul className="flex min-w-0 grow flex-col gap-2 overflow-hidden py-1 pl-1 font-['Noto_Sans_CJK_SC',sans-serif]">
              {results.map((r, i) => (
                <li key={i} className={`flex shrink-0 ${r.active ? '-mb-0.5 mr-[5px] rounded-[4px] border border-[#4a64a8] bg-[#e9ecf6]' : 'border-x border-transparent'}`}>
                  <svg className="mt-px ml-px shrink-0" width="15" height="16" viewBox="0 0 15 16">{r.icon}</svg>
                  <div className={`min-w-0 grow pl-0.5 text-[8px] leading-2 whitespace-nowrap ${r.active ? 'py-px' : ''}`}>
                    <h3 className="pb-px font-bold">{r.title}</h3>
                    {r.lines.map((l, j) => <p key={j}>{l}</p>)}
                  </div>
                  {r.active && (
                    <button aria-label="更多" className="flex w-3.5 shrink-0 items-center justify-center rounded-r-[3px] border-l border-[#4a64a8] bg-[#9aa6cc]">
                      <svg width="10" height="5" viewBox="0 0 10 5"><path d="M0 0h10L5 5z" fill="#000" /></svg>
                    </button>
                  )}
                </li>
              ))}
            </ul>
            <div className="mr-px flex w-[15px] shrink-0 flex-col bg-[#efeeea]">
              <button aria-label="向上" className="flex h-[15px] items-center justify-center border border-t-white border-r-[#666] border-b-[#666] border-l-white bg-[#d6d3cc]">
                <svg width="7" height="4" viewBox="0 0 7 4"><path d="M0 4h7L3.500 0z" fill="#000" /></svg>
              </button>
              <div className="h-[178px] border border-t-white border-r-[#777] border-b-[#777] border-l-white bg-[#d6d3cc]" />
              <button aria-label="向下" className="mt-auto flex h-[15px] items-center justify-center border border-t-white border-r-[#666] border-b-[#666] border-l-white bg-[#d6d3cc]">
                <svg width="7" height="4" viewBox="0 0 7 4"><path d="M0 0h7L3.500 4z" fill="#000" /></svg>
              </button>
            </div>
          </div>
        </div>

        <SectionHead>设置</SectionHead>
        <div className="border-x border-b border-[#b0b0b0] bg-[#d2d2d2] px-1 py-[3px]">
          <Option label="仅在当前应用模块中查找命令" defaultChecked={false} />
          <Option label="显示菜单条路径" defaultChecked />
          <Option label="显示工具条路径" defaultChecked />
        </div>
        <footer className="mt-0.5 flex justify-end border-t border-[#b8b8b8] pt-[3px] pr-1.5 pb-[3px]">
          <button className="h-[15px] w-[34px] rounded-[2px] border border-[#555] bg-linear-to-b from-[#f4f4f4] to-[#cfcfcf] text-[8px] leading-3">关闭</button>
        </footer>
      </div>
    </section>
  );
}

export default function App() {
  return (
    <div className={`relative min-h-screen overflow-hidden bg-black text-black ${ui}`}>
      <Gradients />
      <header className="flex h-[13px] items-center overflow-hidden border-t border-[#555] bg-[#1b1b1b] font-['Liberation_Mono','Noto_Sans_CJK_SC',monospace] text-[8px] leading-2 font-bold whitespace-pre text-white">
        <svg className="mr-1 h-[11px] w-[11px]" viewBox="0 6 18 18">{icons.nx}</svg>
        NX 7.5 - 建模 - [1-LINE.prt]
      </header>
      <MenuBar />
      <ToolRow items={row1} />
      <ToolRow items={row2} />
      <ToolRow items={row3} />
      <SelectionBar />
      <footer className="flex h-[15px] items-center border-b border-[#a01010] bg-linear-to-b from-[#e0e0e0] to-[#d2d2d2] text-[8px] font-bold whitespace-nowrap">
        <span className="w-[111px] overflow-hidden">选择对象并使用 MB3，或者双击</span>
      </footer>
      <CommandFinder />
    </div>
  );
}
